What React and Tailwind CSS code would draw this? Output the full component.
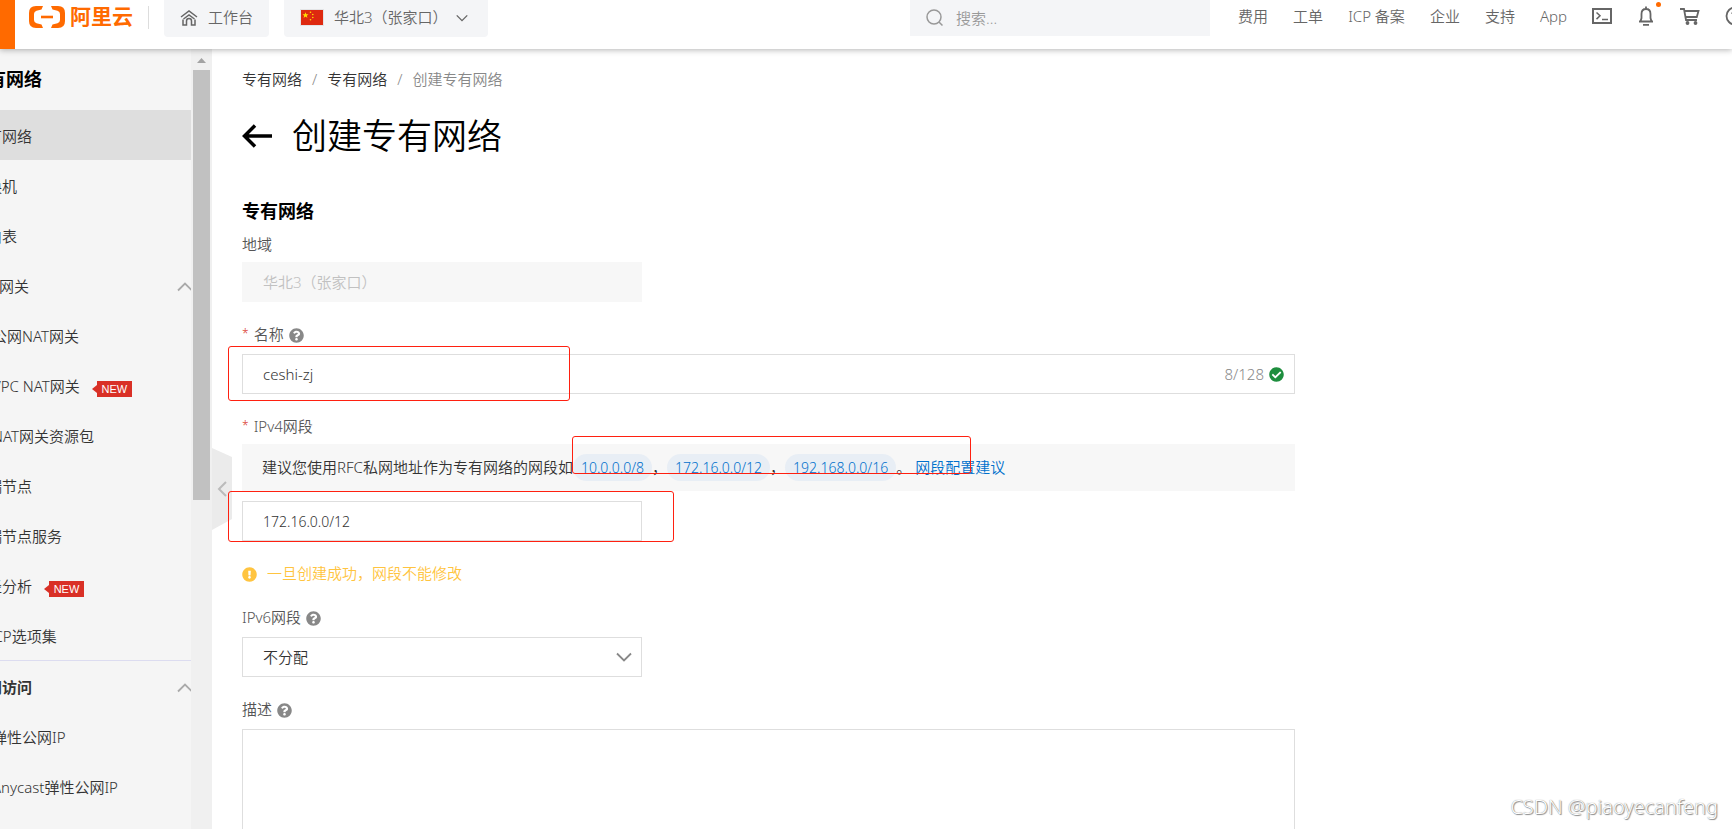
import { useState } from "react";
import {
  FaCheckCircle,
  FaExclamationCircle,
  FaQuestionCircle,
} from "react-icons/fa";

const navLinks = ["费用", "工单", "ICP 备案", "企业", "支持", "App"];

const menuItems = [
  { title: "专有网络", active: true },
  { title: "交换机" },
  { title: "路由表" },
  { title: "NAT网关", group: true },
  { title: "公网NAT网关", child: true },
  { title: "VPC NAT网关", child: true, isNew: true },
  { title: "NAT网关资源包", child: true },
  { title: "终端节点" },
  { title: "终端节点服务" },
  { title: "路径分析", isNew: true },
  { title: "DHCP选项集" },
];

const publicItems = [
  { title: "公网访问", group: true, bold: true },
  { title: "弹性公网IP", child: true },
  { title: "Anycast弹性公网IP", child: true },
];

const suggestedCidrs = ["10.0.0.0/8", "172.16.0.0/12", "192.168.0.0/16"];

const Chevron = ({ className }) => (
  <svg
    viewBox="0 0 16 16"
    className={className}
    fill="none"
    stroke="currentColor"
    strokeWidth="1.8"
  >
    <path d="M1 4.5 8 11.5 15 4.5" />
  </svg>
);

const Logo = () => (
  <svg viewBox="0 0 38 24" className="h-6 w-[38px]" fill="none">
    <path
      d="M15 1H8Q1 1 1 8v8q0 7 7 7h7l-1.500-3.500-5-1.300Q6 17.500 6 15V9q0-2.500 2.500-3.200l5-1.300z"
      fill="#ff6a00"
    />
    <path
      d="M23 1h7q7 0 7 7v8q0 7-7 7h-7l1.500-3.500 5-1.300Q32 17.500 32 15V9q0-2.500-2.500-3.200l-5-1.300z"
      fill="#ff6a00"
    />
    <path d="M13 12h12" stroke="#ff6a00" strokeWidth="2.600" />
  </svg>
);

const Flag = () => (
  <svg viewBox="0 0 24 17" className="h-[17px] w-6 shrink-0">
    <rect width="24" height="17" fill="#e3e4e6" />
    <rect x="1" y="1" width="22" height="15" fill="#de2910" />
    <path
      d="m5.500 3.200.8 2.100h2.200L6.800 6.700l.6 2.200-1.900-1.300-1.900 1.300.6-2.200-1.700-1.400h2.200z"
      fill="#ffde00"
    />
    <g fill="#ffde00">
      <circle cx="10.500" cy="3.200" r=".8" />
      <circle cx="12.800" cy="5.500" r=".8" />
      <circle cx="12.800" cy="8.500" r=".8" />
      <circle cx="10.500" cy="10.800" r=".8" />
    </g>
  </svg>
);

const NewTag = () => (
  <span className="ml-3 flex items-center pt-1">
    <svg viewBox="0 0 5 8" className="h-2 w-[5px]">
      <path d="M5 0v8L0 4z" fill="#d93026" />
    </svg>
    <span className="h-4 w-[35px] bg-[#d93026] text-center font-['Liberation_Sans'] text-[11px] leading-4 text-white">
      NEW
    </span>
  </span>
);

const MenuItem = ({ item }) => (
  <li>
    <a
      href="#"
      className={`flex h-[50px] items-center whitespace-nowrap pt-[3px] text-[15px] text-[#333] ${
        item.active ? "bg-[#dedede]" : ""
      } ${item.child ? "pl-5" : ""} ${item.bold ? "font-bold" : ""}`}
    >
      {item.title}
      {item.isNew && <NewTag />}
      {item.group && (
        <Chevron className="-mr-0.5 ml-auto size-4 rotate-180 text-[#aaa]" />
      )}
    </a>
  </li>
);

const Header = () => (
  <header className="relative z-10 flex h-[49px] shrink-0 items-start bg-white text-[15px] text-[#666] shadow-[0_1px_6px_rgba(0,0,0,0.3)]">
    <button aria-label="菜单" className="h-full w-[15px] shrink-0 bg-[#ff6a00]" />
    <a href="#" className="ml-[13px] flex h-[34px] shrink-0 items-center gap-1">
      <Logo />
      <span className="text-[21px] font-bold text-[#ff6a00]">阿里云</span>
    </a>
    <div className="ml-[15px] mt-1.5 h-[23px] w-px shrink-0 bg-[#ddd]" />
    <a
      href="#"
      className="ml-[15px] flex h-[37px] shrink-0 items-center gap-2.5 rounded-b-sm bg-[#f4f5f7] px-4 pb-0.5"
    >
      <svg
        viewBox="0 0 18 18"
        className="size-[18px]"
        fill="none"
        stroke="currentColor"
        strokeWidth="1.500"
      >
        <path d="M1 8 9 2l8 6M3 10.500V16h3.500v-4q0-2.500 2.500-2.500t2.500 2.500v4H15v-5.500M3.500 10 9 6l5.500 4" />
      </svg>
      工作台
    </a>
    <button className="ml-[15px] flex h-[37px] shrink-0 items-center rounded-b-sm bg-[#f4f5f7] pb-0.5 pl-4 pr-5">
      <Flag />
      <span className="ml-2.5">华北3（张家口）</span>
      <Chevron className="ml-2 size-3" />
    </button>

    <label className="ml-auto mr-7 flex h-9 w-[300px] items-center gap-3 bg-[#f4f5f7] px-4">
      <svg
        viewBox="0 0 18 18"
        className="size-[18px] text-[#999]"
        fill="none"
        stroke="currentColor"
        strokeWidth="1.500"
      >
        <circle cx="8" cy="8" r="7" />
        <path d="m13 13 3.500 3.500" />
      </svg>
      <input
        aria-label="搜索"
        placeholder="搜索..."
        className="min-w-0 flex-1 bg-transparent outline-none placeholder:text-[#999]"
      />
    </label>

    <nav className="-mr-[13px] flex h-8 shrink-0 items-center gap-[25px]">
      {navLinks.map((text) => (
        <a key={text} href="#">
          {text}
        </a>
      ))}
      <button aria-label="云命令行">
        <svg
          viewBox="0 0 20 16"
          className="h-4 w-5"
          fill="none"
          stroke="currentColor"
        >
          <rect x="1" y="1" width="18" height="14" strokeWidth="2" />
          <path d="m4.500 4.500 3.500 3.300-3.500 3.300M10 11.500h6" strokeWidth="1.500" />
        </svg>
      </button>
      <button aria-label="消息" className="relative">
        <svg
          viewBox="0 0 18 20"
          className="h-5 w-[18px]"
          fill="none"
          stroke="currentColor"
          strokeWidth="1.800"
        >
          <path d="M9 .5V3M2 15.500h14M3.500 15.500 4.500 12V8Q4.500 3 9 3t4.500 5v4l1 3.500M6 18.800h6" />
        </svg>
        <span className="absolute -right-1.5 -top-1 size-[5px] rounded-full bg-[#ff6a00]" />
      </button>
      <button aria-label="购物车">
        <svg
          viewBox="0 0 20 17"
          className="h-[17px] w-5"
          fill="none"
          stroke="currentColor"
          strokeWidth="1.800"
        >
          <path d="M0 1h4l2 11h11M4.500 3h14l-1.700 6H5.500" />
          <circle cx="7.500" cy="15" r="1" fill="currentColor" />
          <circle cx="15.500" cy="15" r="1" fill="currentColor" />
        </svg>
      </button>
      <button aria-label="帮助">
        <svg
          viewBox="0 0 20 20"
          className="size-5"
          fill="none"
          stroke="currentColor"
          strokeWidth="1.800"
        >
          <circle cx="10" cy="10" r="8.500" />
          <path d="M7.300 8Q7.300 5.500 10 5.500T12.700 8q0 1.500-2.700 3v1M10 13.500V15" />
        </svg>
      </button>
    </nav>
  </header>
);

const Sidebar = () => (
  <aside className="flex w-[212px] shrink-0 bg-[#f0f0f0]">
    <div className="w-[191px] overflow-hidden bg-[#f5f5f5]">
      <div className="-ml-7">
        <h2 className="-ml-0.5 flex h-[61px] items-center text-[18px] font-bold text-black">
          专有网络
        </h2>
        <ul>
          {menuItems.map((item) => (
            <MenuItem key={item.title} item={item} />
          ))}
        </ul>
        <ul className="border-t border-[#dcdcf0]">
          {publicItems.map((item) => (
            <MenuItem key={item.title} item={item} />
          ))}
        </ul>
      </div>
    </div>
    {/* Scrollbar */}
    <div className="flex flex-1 flex-col items-center pt-[9px]">
      <svg viewBox="0 0 9 5" className="h-[5px] w-[9px]">
        <path d="M0 5h9L4.500 0z" fill="#a3a3a3" />
      </svg>
      <div className="mt-[7px] h-[430px] w-[17px] bg-[#c1c1c1]" />
    </div>
  </aside>
);

const FieldLabel = ({ htmlFor, required, help, className = "mb-1.5", children }) => (
  <div className={`flex h-6 items-center text-[15px] text-[#555] ${className}`}>
    {required && <span className="mr-[5px] text-[12px] text-[#d93026]">*</span>}
    <label htmlFor={htmlFor}>{children}</label>
    {help && <FaQuestionCircle className="ml-[5px] mt-0.5 size-[15px] text-[#888]" />}
  </div>
);

// Red frame drawn over the fields that matter
const Mark = ({ className }) => (
  <div
    className={`pointer-events-none absolute z-10 rounded-[3px] border border-[#ff2010] ${className}`}
  />
);

const CreateVpcForm = () => {
  const [name, setName] = useState("ceshi-zj");
  const [cidr, setCidr] = useState("172.16.0.0/12");

  return (
    <form className="w-full max-w-[1053px]">
      <h2 className="mb-[9px] mt-[41px] text-[18px] font-bold leading-6 text-black">
        专有网络
      </h2>

      <FieldLabel htmlFor="region">地域</FieldLabel>
      <select
        id="region"
        disabled
        className="mb-5 block h-10 w-[400px] appearance-none bg-[#f7f7f7] px-[21px] text-[15px] text-[#c1c1c1] opacity-100"
      >
        <option>华北3（张家口）</option>
      </select>

      <FieldLabel htmlFor="name" required help className="mb-2">
        名称
      </FieldLabel>
      <div className="relative mb-5">
        <input
          id="name"
          value={name}
          onChange={(e) => setName(e.target.value)}
          className="block h-10 w-full border border-[#dedede] px-5 text-[15px] text-[#333] outline-none"
        />
        <div className="absolute inset-y-0 right-[11px] flex items-center gap-[5px] text-[15px] text-[#888]">
          {name.length}/128
          <FaCheckCircle className="size-[15px] text-[#1e8e3e]" />
        </div>
        <Mark className="-left-3.5 -top-2 h-[55px] w-[342px]" />
      </div>

      <FieldLabel htmlFor="cidr" required>
        IPv4网段
      </FieldLabel>
      <div className="relative mb-2.5 flex h-[47px] items-center whitespace-nowrap bg-[#f7f7f7] px-5 text-[15px] text-[#333]">
        建议您使用RFC私网地址作为专有网络的网段如
        {suggestedCidrs.map((item, index) => (
          <span key={item} className="flex items-center">
            <button
              type="button"
              onClick={() => setCidr(item)}
              className="h-[27px] rounded-full bg-[#e8eef5] px-2 text-[14px] text-[#0070cc]"
            >
              {item}
            </button>
            {index < suggestedCidrs.length - 1 ? "，" : "。"}
          </span>
        ))}
        <a href="#" className="ml-1 text-[#0070cc]">
          网段配置建议
        </a>
        <Mark className="-top-2 left-[330px] h-[38px] w-[399px]" />
      </div>
      <div className="relative mb-5 w-[400px]">
        <input
          id="cidr"
          value={cidr}
          onChange={(e) => setCidr(e.target.value)}
          className="block h-10 w-full border border-[#dedede] px-5 text-[14px] text-[#333] outline-none"
        />
        <Mark className="-left-3.5 -top-2.5 h-[51px] w-[446px]" />
      </div>
      <p className="mb-5 flex h-6 items-center gap-2.5 text-[15px] text-[#ffc440]">
        <FaExclamationCircle className="mt-0.5 size-[15px]" />
        一旦创建成功，网段不能修改
      </p>

      <FieldLabel htmlFor="ipv6" help className="mb-2">
        IPv6网段
      </FieldLabel>
      <div className="relative mb-5 w-[400px]">
        <select
          id="ipv6"
          className="block h-10 w-full appearance-none border border-[#dedede] bg-white px-5 text-[15px] text-[#333] outline-none"
        >
          <option>不分配</option>
          <option>分配</option>
        </select>
        <Chevron className="pointer-events-none absolute right-2.5 top-3 size-4 text-[#888]" />
      </div>

      <FieldLabel htmlFor="desc" help className="mb-2">
        描述
      </FieldLabel>
      <textarea
        id="desc"
        className="block h-40 w-full resize-none border border-[#dedede] px-5 py-2 text-[15px] outline-none"
      />
    </form>
  );
};

const App = () => {
  return (
    <div className="relative flex h-screen flex-col overflow-hidden bg-white font-['Noto_Sans','Noto_Sans_CJK_SC',sans-serif] font-[350]">
      <Header />
      <div className="flex min-h-0 flex-1">
        <Sidebar />
        <main className="relative min-w-0 flex-1 overflow-hidden pl-[30px] pr-6 pt-[19px]">
          {/* Collapse handle */}
          <button
            aria-label="收起"
            className="absolute left-0 top-[399px] h-[82px] w-5 text-[#bbb]"
          >
            <svg viewBox="0 0 20 82" className="h-full w-full" fill="none">
              <path d="M0 0 20 9v62L0 82z" fill="#ebebeb" />
              <path d="m14 34-7 7 7 7" stroke="currentColor" strokeWidth="2" />
            </svg>
          </button>

          <nav className="flex h-[22px] items-center text-[15px] text-[#333]">
            <a href="#">专有网络</a>
            <span className="mx-2.5 text-[#888]">/</span>
            <a href="#">专有网络</a>
            <span className="mx-2.5 text-[#888]">/</span>
            <span className="text-[#888]">创建专有网络</span>
          </nav>
          <div className="mt-6 flex h-11 items-center gap-5 text-black">
            <button aria-label="返回">
              <svg
                viewBox="0 0 30 24"
                className="h-6 w-[30px]"
                fill="none"
                stroke="currentColor"
                strokeWidth="3.500"
              >
                <path d="M13 1.500 2.500 12 13 22.500M2.500 12H30" />
              </svg>
            </button>
            <h1 className="text-[35px] leading-[44px]">创建专有网络</h1>
          </div>

          <CreateVpcForm />
        </main>
      </div>
      <div className="pointer-events-none absolute bottom-2 right-3.5 text-[20px] leading-7 text-white [text-shadow:0_0_1px_#777,1px_1px_1px_#888]">
        CSDN @piaoyecanfeng
      </div>
    </div>
  );
};

export default App;
